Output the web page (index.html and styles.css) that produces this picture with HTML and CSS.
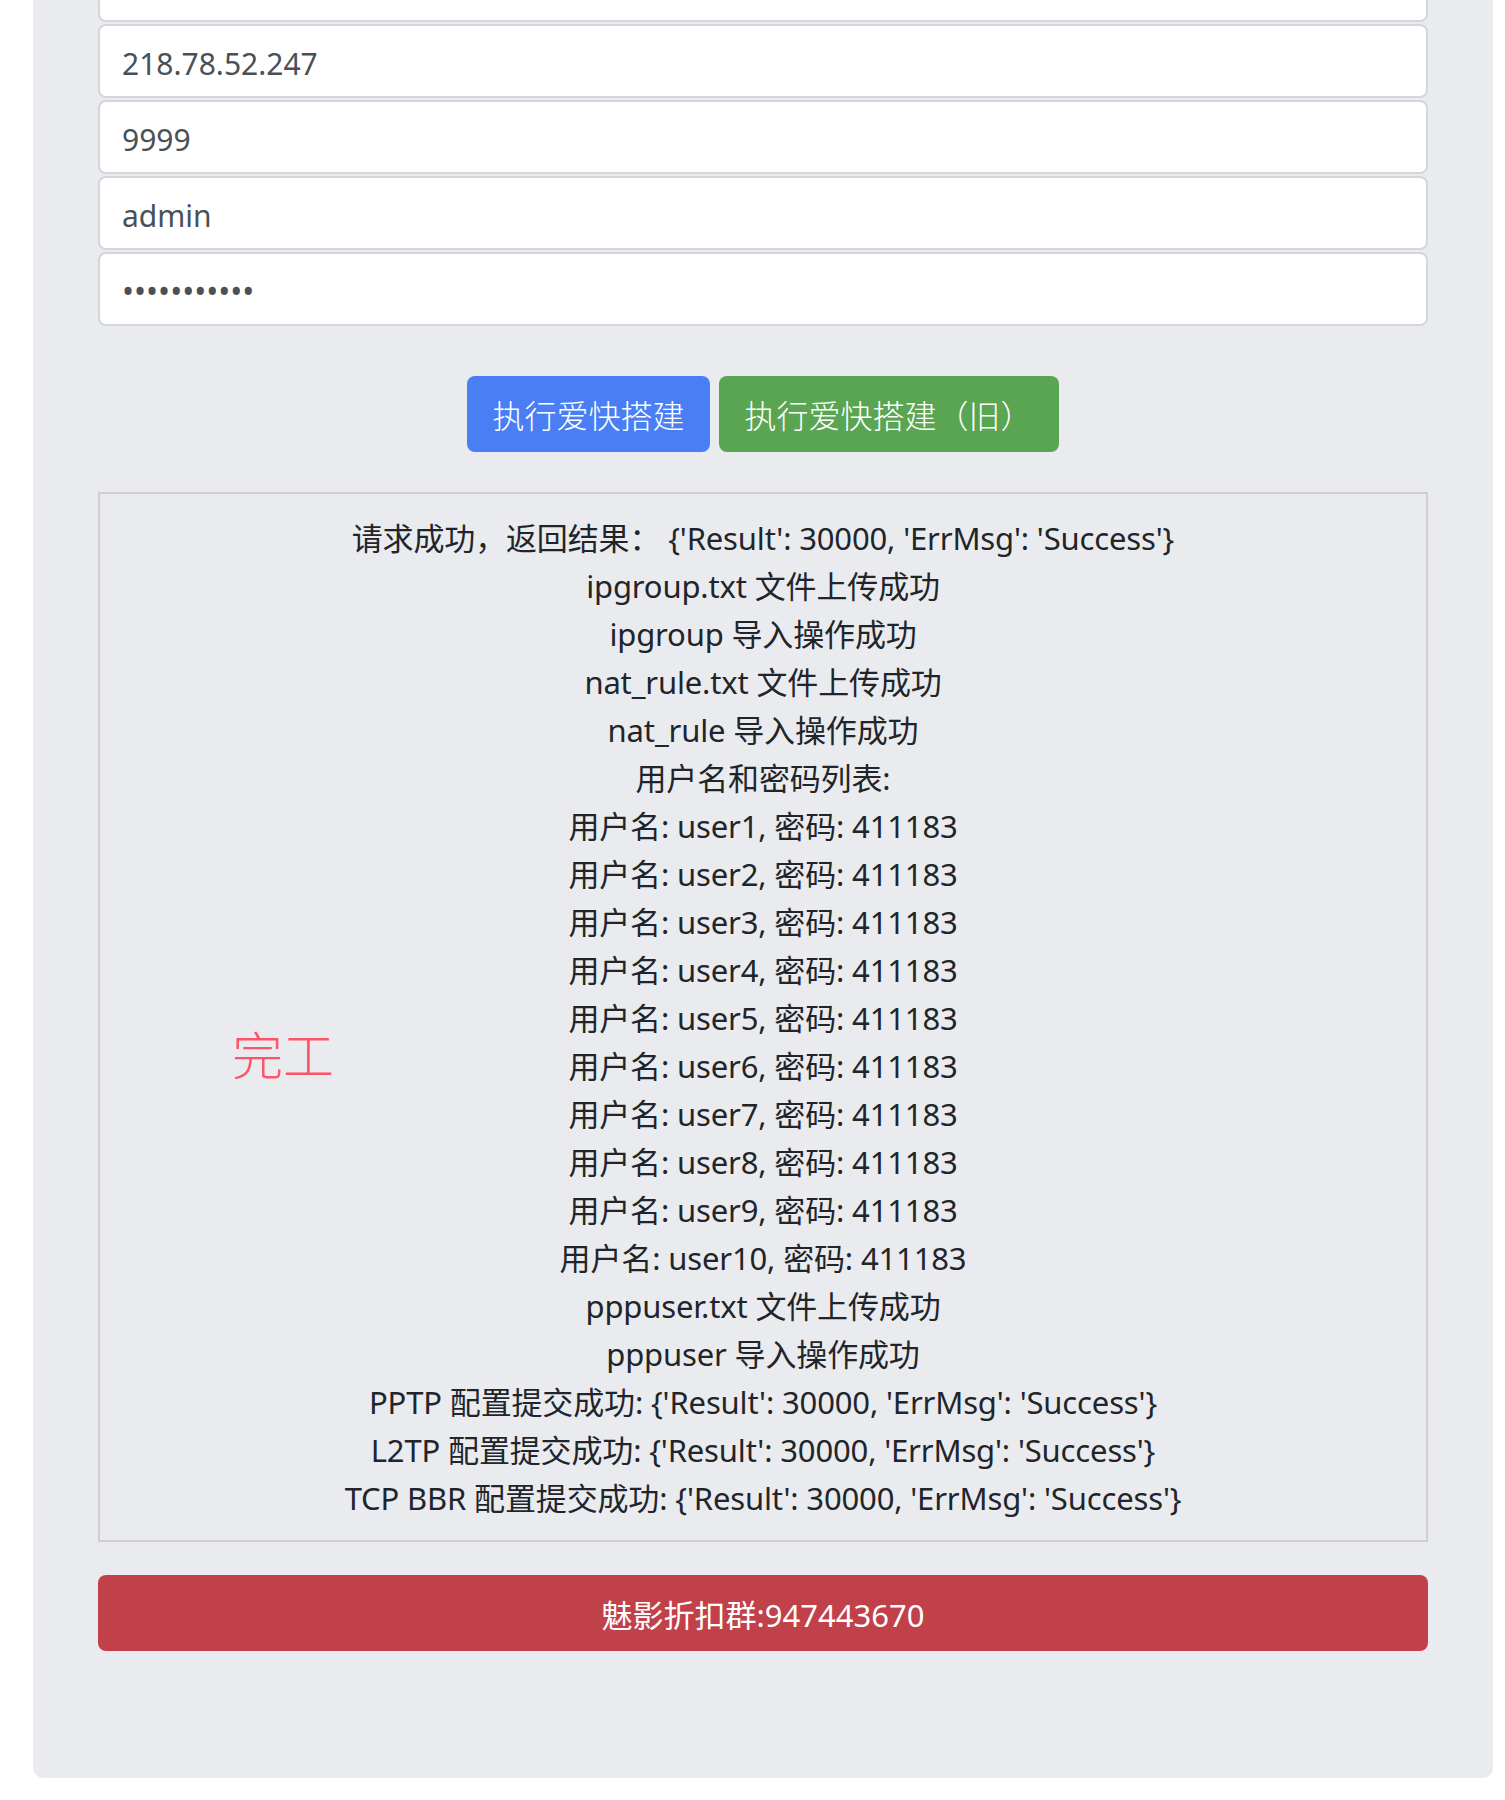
FILE: index.html
```html
<!DOCTYPE html>
<html lang="zh-CN">
<head>
<meta charset="utf-8">
<title>爱快搭建</title>
<link rel="stylesheet" href="styles.css">
</head>
<body>
<div class="panel">
  <form class="form">
    <input class="field" type="text" value="">
    <input class="field" type="text" value="218.78.52.247">
    <input class="field" type="text" value="9999">
    <input class="field" type="text" value="admin">
    <input class="field field-pass" type="password" value="abcdefghijk">
    <div class="actions">
      <button type="button" class="btn btn-blue">执行爱快搭建</button>
      <button type="button" class="btn btn-green">执行爱快搭建（旧）</button>
    </div>
  </form>
  <div class="output">
    <div class="done">完工</div>
    <div class="line">请求成功，返回结果： {'Result': 30000, 'ErrMsg': 'Success'}</div>
    <div class="line">ipgroup.txt 文件上传成功</div>
    <div class="line">ipgroup 导入操作成功</div>
    <div class="line">nat_rule.txt 文件上传成功</div>
    <div class="line">nat_rule 导入操作成功</div>
    <div class="line">用户名和密码列表:</div>
    <div class="line">用户名: user1, 密码: 411183</div>
    <div class="line">用户名: user2, 密码: 411183</div>
    <div class="line">用户名: user3, 密码: 411183</div>
    <div class="line">用户名: user4, 密码: 411183</div>
    <div class="line">用户名: user5, 密码: 411183</div>
    <div class="line">用户名: user6, 密码: 411183</div>
    <div class="line">用户名: user7, 密码: 411183</div>
    <div class="line">用户名: user8, 密码: 411183</div>
    <div class="line">用户名: user9, 密码: 411183</div>
    <div class="line">用户名: user10, 密码: 411183</div>
    <div class="line">pppuser.txt 文件上传成功</div>
    <div class="line">pppuser 导入操作成功</div>
    <div class="line">PPTP 配置提交成功: {'Result': 30000, 'ErrMsg': 'Success'}</div>
    <div class="line">L2TP 配置提交成功: {'Result': 30000, 'ErrMsg': 'Success'}</div>
    <div class="line">TCP BBR 配置提交成功: {'Result': 30000, 'ErrMsg': 'Success'}</div>
  </div>
  <div class="banner">魅影折扣群:947443670</div>
</div>
</body>
</html>
```

FILE: styles.css
```css
html, body {
  margin: 0;
  padding: 0;
  background: #ffffff;
}

body {
  font-family: "Noto Sans", "Noto Sans CJK SC", sans-serif;
  color: #212529;
}

.panel {
  width: 1460px;
  box-sizing: border-box;
  margin: -52px 0 0 33px;
  padding: 0 65px 127px;
  background: #eaebef;
  border-radius: 0 0 10px 10px;
}

.form {
  display: flex;
  flex-direction: column;
  gap: 2px;
  margin: 0;
}

.field {
  display: block;
  width: 100%;
  height: 74px;
  box-sizing: border-box;
  margin: 0;
  padding: 4px 22px 0;
  border: 2px solid #d3d6db;
  border-radius: 8px;
  background: #ffffff;
  font-family: "Noto Sans", "Noto Sans CJK SC", sans-serif;
  font-size: 30px;
  color: #495057;
  outline: none;
}

.field-pass {
  padding-top: 2px;
  font-size: 32px;
  letter-spacing: 0;
}

.actions {
  display: flex;
  justify-content: center;
  gap: 9px;
  margin-top: 48px;
}

.btn {
  height: 76px;
  border: none;
  border-radius: 8px;
  color: #ffffff;
  font-family: "Noto Sans", "Noto Sans CJK SC", sans-serif;
  font-size: 32px;
  font-weight: 300;
  cursor: pointer;
}

.btn-blue {
  background: #4a7ef5;
  padding: 0 25px;
}

.btn-green {
  background: #5aa552;
  padding: 0 26px;
}

.output {
  position: relative;
  margin-top: 40px;
  border: 2px solid #cfcfcf;
  padding: 20px 0 18px;
  text-align: center;
  font-size: 31px;
  line-height: 48px;
  letter-spacing: -0.15px;
  color: #212529;
}

.done {
  position: absolute;
  left: 132px;
  top: 536px;
  font-size: 51px;
  font-weight: 300;
  line-height: 1;
  letter-spacing: 0;
  color: #fe5469;
}

.banner {
  margin-top: 33px;
  height: 76px;
  display: flex;
  align-items: center;
  justify-content: center;
  background: #c1414b;
  border-radius: 8px;
  color: #ffffff;
  font-size: 31px;
}
```
